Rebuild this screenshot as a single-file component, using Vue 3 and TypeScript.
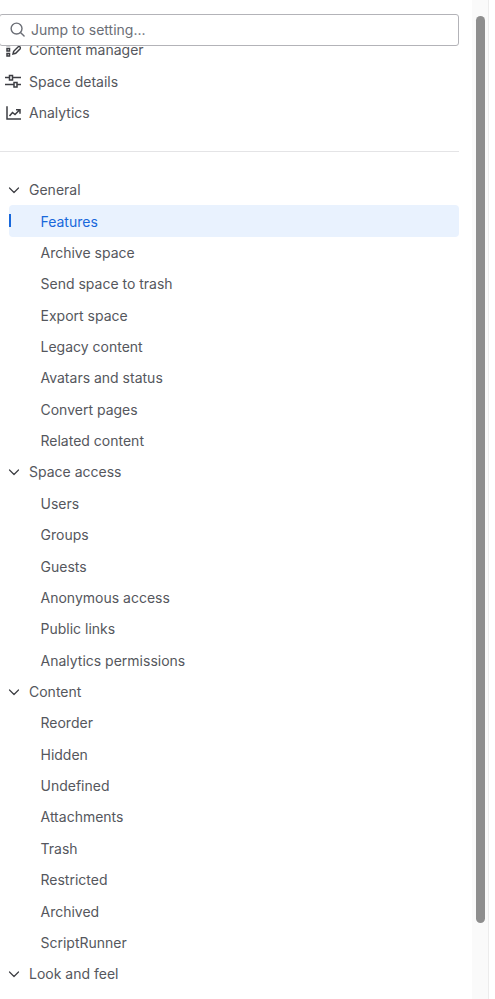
<template>
  <div class="page">
    <div class="panel">
      <div class="search">
        <svg class="search-icon" width="15" height="15" viewBox="0 0 16 16" fill="none">
          <circle cx="7" cy="7" r="5.8" stroke="#6b6e76" stroke-width="1.5" />
          <path d="M11.2 11.2L15 15" stroke="#6b6e76" stroke-width="1.5" stroke-linecap="round" />
        </svg>
        <span class="search-text">Jump to setting...</span>
      </div>

      <nav class="nav">
        <div v-for="link in topLinks" :key="link.label" class="row top-row">
          <svg class="top-icon" width="16" height="16" viewBox="0 0 16 16" fill="none" stroke="#3d3e43" stroke-width="1.5">
            <path v-for="d in link.paths" :key="d" :d="d" />
          </svg>
          <span>{{ link.label }}</span>
        </div>

        <div class="divider"></div>

        <section v-for="group in groups" :key="group.title">
          <div class="row group-row">
            <svg class="chevron" width="12" height="12" viewBox="0 0 12 12" fill="none">
              <path d="M1.5 4L6 8.5L10.5 4" stroke="#3d3e43" stroke-width="1.2" stroke-linecap="round" stroke-linejoin="round" />
            </svg>
            <span>{{ group.title }}</span>
          </div>
          <div
            v-for="item in group.items"
            :key="item"
            class="row sub-row"
            :class="{ active: item === activeItem }"
          >
            {{ item }}
          </div>
        </section>
      </nav>
    </div>

    <div class="scrollbar">
      <div class="thumb"></div>
    </div>
  </div>
</template>

<script setup lang="ts">
interface Group {
  title: string
  items: string[]
}

const activeItem = 'Features'

const topLinks = [
  {
    label: 'Content manager',
    paths: [
      'M2 1h2.5v2.5H2zM2 6.5h2.5V9H2zM2 11.5h2.5V14H2z',
      'M8 12l.7-2.7 5.3-5.3 2 2-5.3 5.3z',
    ],
  },
  {
    label: 'Space details',
    paths: [
      'M0 4.5h4M8 4.5h8M4.5 2.5h3v4.5h-3z',
      'M0 11.5h9M12.5 11.5h3.5M9 9.5h3v4.5H9z',
    ],
  },
  {
    label: 'Analytics',
    paths: ['M2 1.2v12.8h14', 'M4.5 11l3-3.5 2.5 2 4.5-4.5M11 4.8h4v4'],
  },
]

const groups: Group[] = [
  {
    title: 'General',
    items: [
      'Features',
      'Archive space',
      'Send space to trash',
      'Export space',
      'Legacy content',
      'Avatars and status',
      'Convert pages',
      'Related content',
    ],
  },
  {
    title: 'Space access',
    items: ['Users', 'Groups', 'Guests', 'Anonymous access', 'Public links', 'Analytics permissions'],
  },
  {
    title: 'Content',
    items: ['Reorder', 'Hidden', 'Undefined', 'Attachments', 'Trash', 'Restricted', 'Archived', 'ScriptRunner'],
  },
  {
    title: 'Look and feel',
    items: [],
  },
]
</script>

<style scoped>
.page {
  display: flex;
  width: 495px;
  height: 999px;
  overflow: hidden;
  background: #fff;
  font-family: Inter, "Noto Sans", sans-serif;
  font-size: 14px;
  color: #55575d;
}

.panel {
  width: 472px;
  flex-shrink: 0;
  padding-top: 14px;
  box-sizing: border-box;
}

.search {
  position: relative;
  z-index: 1;
  display: flex;
  align-items: center;
  gap: 6px;
  width: 460px;
  height: 32px;
  margin-left: -1px;
  padding: 0 0 2px 10px;
  box-sizing: border-box;
  background: #fff;
  border: 1px solid #b3b3b8;
  border-top-width: 1.5px;
  border-radius: 3px;
  color: #6b6e76;
}

.search-icon {
  flex-shrink: 0;
}

.nav {
  width: 459px;
  margin-top: -12px;
}

.row {
  display: flex;
  align-items: center;
  height: 31.36px;
}

.top-row,
.group-row {
  padding-left: 29px;
  position: relative;
}

.top-icon {
  position: absolute;
  left: 5px;
  top: 8px;
}

.chevron {
  position: absolute;
  left: 8px;
  top: 10px;
}

.divider {
  height: 1px;
  margin: 23px 0 22px;
  background: #e4e4e6;
}

.sub-row {
  position: relative;
  margin-left: 9px;
  padding-left: 31.5px;
  border-radius: 4px;
}

.active {
  background: #e9f2fe;
  color: #1868db;
}

.active::before {
  content: "";
  position: absolute;
  left: 0;
  top: 9px;
  width: 2px;
  height: 13px;
  background: #1868db;
}

.scrollbar {
  width: 16px;
  height: 999px;
  background: #fafafa;
  border-right: 1px solid #ececec;
  display: flex;
  justify-content: center;
  box-sizing: content-box;
}

.thumb {
  width: 9px;
  height: 907px;
  margin-top: 16px;
  background: #8e8e8e;
  border-radius: 5px;
}
</style>
